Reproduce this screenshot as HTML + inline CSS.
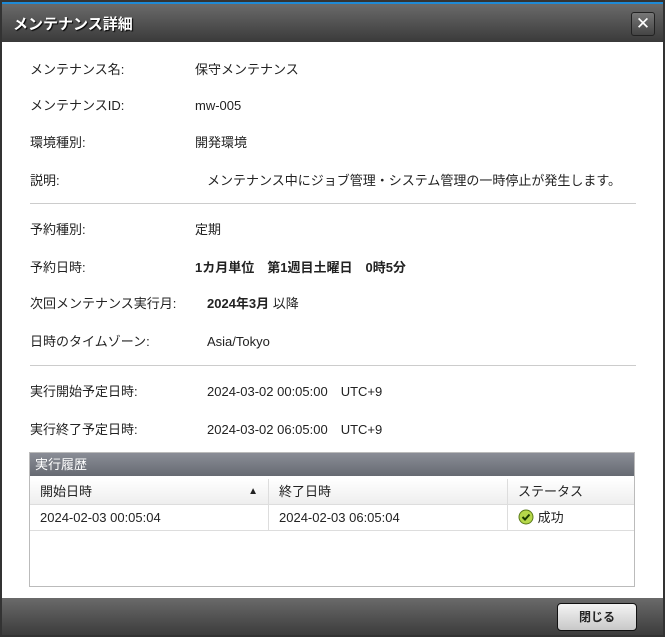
<html><head><style>
body{margin:0;width:665px;height:637px;background:#fff;font-family:"Liberation Sans","Noto Sans CJK JP",sans-serif;font-size:13px;color:#222;position:relative;overflow:hidden}
.frame{position:absolute;left:0;top:0;width:661px;height:633px;border:2px solid #333;background:#fff}
.title{position:absolute;left:0;top:0;width:661px;height:40px;background:linear-gradient(#6a6a6a,#3a3a3a);border-top:2px solid #1e8ad6;box-sizing:border-box}
.title span{position:absolute;left:11px;top:9px;color:#fff;font-weight:bold;font-size:15px;text-shadow:1px 1px 1px #000}
.x{position:absolute;right:8px;top:8px;width:22px;height:22px;border:1px solid #222;border-radius:3px;background:linear-gradient(#777,#444);color:#fff;font-size:17px;text-align:center;line-height:22px}
.r{position:absolute;left:28px;white-space:nowrap;line-height:16px}
.v{position:absolute;left:193px;white-space:nowrap;line-height:16px}
.hr{position:absolute;left:28px;width:606px;height:1px;background:#ccc}
.panel{position:absolute;left:27px;top:450px;width:604px;height:133px;border:1px solid #bbb}
.ph{height:23px;background:linear-gradient(#8a8d96,#666a72);color:#fff;font-size:13px;line-height:23px;padding-left:5px}
.th,.td{position:absolute;height:26px;line-height:26px;font-size:13px;padding-left:10px;box-sizing:border-box;border-right:1px solid #ddd;border-bottom:1px solid #ddd}
.th{background:linear-gradient(#fff,#eee)}
.foot{position:absolute;left:0;top:596px;width:661px;height:37px;background:linear-gradient(#6a6a6a,#3c3c3c)}
.btn{position:absolute;left:555px;top:5px;width:78px;height:26px;border:1px solid #111;border-radius:4px;background:linear-gradient(#f4f4f4,#c8c8c8);text-align:center;line-height:26px;font-weight:bold;font-size:12px}
</style></head><body><div class="frame">
<div class="title"><span>メンテナンス詳細</span><div class="x">✕</div></div>
<div class="r" style="top:60px">メンテナンス名:</div><div class="v" style="top:60px">保守メンテナンス</div>
<div class="r" style="top:96px">メンテナンスID:</div><div class="v" style="top:96px">mw-005</div>
<div class="r" style="top:133px">環境種別:</div><div class="v" style="top:133px">開発環境</div>
<div class="r" style="top:171px">説明:</div><div class="v" style="top:171px;left:205px">メンテナンス中にジョブ管理・システム管理の一時停止が発生します。</div>
<div class="hr" style="top:201px"></div>
<div class="r" style="top:220px">予約種別:</div><div class="v" style="top:220px">定期</div>
<div class="r" style="top:258px">予約日時:</div><div class="v" style="top:258px;font-weight:bold">1カ月単位　第1週目土曜日　0時5分</div>
<div class="r" style="top:294px">次回メンテナンス実行月:</div><div class="v" style="top:294px;left:205px"><b>2024年3月</b> 以降</div>
<div class="r" style="top:332px">日時のタイムゾーン:</div><div class="v" style="top:332px;left:205px">Asia/Tokyo</div>
<div class="hr" style="top:363px"></div>
<div class="r" style="top:382px">実行開始予定日時:</div><div class="v" style="top:382px;left:205px">2024-03-02 00:05:00　UTC+9</div>
<div class="r" style="top:420px">実行終了予定日時:</div><div class="v" style="top:420px;left:205px">2024-03-02 06:05:00　UTC+9</div>
<div class="panel"><div class="ph">実行履歴</div>
<div class="th" style="left:0;top:26px;width:239px">開始日時<span style="position:absolute;right:10px;font-size:10px">▲</span></div>
<div class="th" style="left:239px;top:26px;width:239px">終了日時</div>
<div class="th" style="left:478px;top:26px;width:126px;border-right:0">ステータス</div>
<div class="td" style="left:0;top:52px;width:239px">2024-02-03 00:05:04</div>
<div class="td" style="left:239px;top:52px;width:239px">2024-02-03 06:05:04</div>
<div class="td" style="left:478px;top:52px;width:126px;border-right:0"><svg width="16" height="16" style="vertical-align:-3px"><circle cx="8" cy="8" r="7" fill="#b6d84a" stroke="#5a7a1a"/><path d="M4.5 8l2.5 2.5 4.5-5" stroke="#1a3a00" stroke-width="2" fill="none"/></svg> 成功</div>
</div>
<div class="foot"><div class="btn">閉じる</div></div>
</div></body></html>
